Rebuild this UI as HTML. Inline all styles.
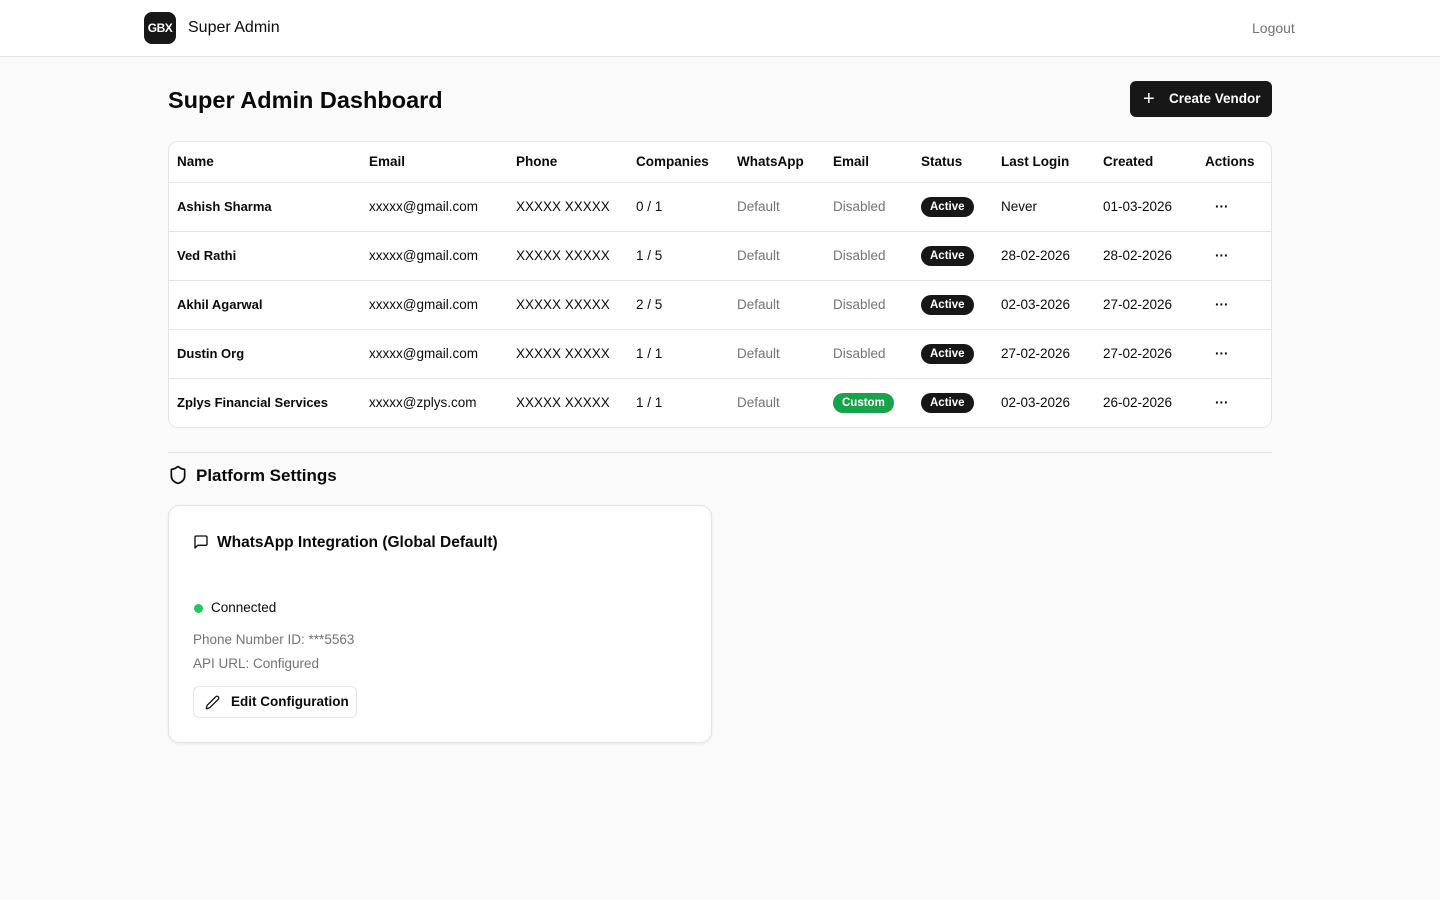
<!DOCTYPE html>
<html><head><meta charset="utf-8"><style>
*{box-sizing:border-box;margin:0;padding:0}
body{width:1440px;height:900px;background:#fafafa;font-family:"Liberation Sans",sans-serif;color:#0a0a0a;font-size:14px;position:relative;overflow:hidden}
.hdr{position:absolute;left:0;top:0;width:1440px;height:57px;background:#fff;border-bottom:1px solid #e5e5e5}
.logo{position:absolute;left:144px;top:12px;width:32px;height:32px;border-radius:8px;background:#171717;color:#fff;font-weight:bold;font-size:12px;line-height:32px;text-align:center;letter-spacing:-0.5px}
.brand{position:absolute;left:188px;top:19px;font-size:16px}
.logout{position:absolute;left:1252px;top:20px;color:#737373;font-size:14px}
h1{position:absolute;left:168px;top:87px;font-size:23.5px;font-weight:bold}
.btn{position:absolute;left:1130px;top:81px;width:142px;height:36px;background:#171717;border-radius:6px;color:#fff;font-weight:bold;font-size:13.5px;line-height:36px;padding-left:39px}
.btn span{position:absolute;left:13px;top:0;font-size:20px;font-weight:normal}
.tbl{position:absolute;left:168px;top:141px;width:1104px;height:287px;background:#fff;border:1px solid #e5e5e5;border-radius:10px;overflow:hidden;font-size:13.5px}
.row{position:relative;height:49px;border-bottom:1px solid #e5e5e5}
.row.h{height:41px}
.row:last-child{border-bottom:none}
.c{position:absolute;top:0;line-height:48px;white-space:nowrap}
.h .c{line-height:40px;font-weight:bold;font-size:13.5px}
.b{font-weight:bold;font-size:13px}
.g{color:#737373}
.badge{display:inline-block;background:#171717;color:#fff;font-size:11.5px;font-weight:bold;line-height:20px;padding:0 9px;border-radius:10px;vertical-align:middle}
.cust{background:#16a34a}
.dots{font-weight:bold;letter-spacing:0px}
.sep{position:absolute;left:168px;top:452px;width:1104px;height:1px;background:#e5e5e5}
.ps{position:absolute;left:196px;top:466px;font-size:17px;font-weight:bold}
.card{position:absolute;left:168px;top:505px;width:544px;height:238px;background:#fff;border:1px solid #e5e5e5;border-radius:12px;box-shadow:0 1px 3px rgba(0,0,0,.08)}
.ebtn{position:absolute;left:24px;top:180px;width:164px;height:32px;border:1px solid #e5e5e5;border-radius:6px;font-weight:bold;font-size:13.5px;line-height:30px;padding-left:37px}
</style></head><body>
<div class="hdr"><div class="logo">GBX</div><div class="brand">Super Admin</div><div class="logout">Logout</div></div>
<h1>Super Admin Dashboard</h1>
<div class="btn"><span>+</span>Create Vendor</div>
<div class="tbl">
<div class="row h"><div class="c" style="left:8px">Name</div><div class="c" style="left:200px">Email</div><div class="c" style="left:347px">Phone</div><div class="c" style="left:467px">Companies</div><div class="c" style="left:568px">WhatsApp</div><div class="c" style="left:664px">Email</div><div class="c" style="left:752px">Status</div><div class="c" style="left:832px">Last Login</div><div class="c" style="left:934px">Created</div><div class="c" style="left:1036px">Actions</div></div>
<div class="row"><div class="c b" style="left:8px">Ashish Sharma</div><div class="c" style="left:200px">xxxxx@gmail.com</div><div class="c" style="left:347px">XXXXX XXXXX</div><div class="c" style="left:467px">0 / 1</div><div class="c g" style="left:568px">Default</div><div class="c g" style="left:664px">Disabled</div><div class="c" style="left:752px"><span class="badge">Active</span></div><div class="c" style="left:832px">Never</div><div class="c" style="left:934px">01-03-2026</div><div class="c dots" style="left:1046px">···</div></div>
<div class="row"><div class="c b" style="left:8px">Ved Rathi</div><div class="c" style="left:200px">xxxxx@gmail.com</div><div class="c" style="left:347px">XXXXX XXXXX</div><div class="c" style="left:467px">1 / 5</div><div class="c g" style="left:568px">Default</div><div class="c g" style="left:664px">Disabled</div><div class="c" style="left:752px"><span class="badge">Active</span></div><div class="c" style="left:832px">28-02-2026</div><div class="c" style="left:934px">28-02-2026</div><div class="c dots" style="left:1046px">···</div></div>
<div class="row"><div class="c b" style="left:8px">Akhil Agarwal</div><div class="c" style="left:200px">xxxxx@gmail.com</div><div class="c" style="left:347px">XXXXX XXXXX</div><div class="c" style="left:467px">2 / 5</div><div class="c g" style="left:568px">Default</div><div class="c g" style="left:664px">Disabled</div><div class="c" style="left:752px"><span class="badge">Active</span></div><div class="c" style="left:832px">02-03-2026</div><div class="c" style="left:934px">27-02-2026</div><div class="c dots" style="left:1046px">···</div></div>
<div class="row"><div class="c b" style="left:8px">Dustin Org</div><div class="c" style="left:200px">xxxxx@gmail.com</div><div class="c" style="left:347px">XXXXX XXXXX</div><div class="c" style="left:467px">1 / 1</div><div class="c g" style="left:568px">Default</div><div class="c g" style="left:664px">Disabled</div><div class="c" style="left:752px"><span class="badge">Active</span></div><div class="c" style="left:832px">27-02-2026</div><div class="c" style="left:934px">27-02-2026</div><div class="c dots" style="left:1046px">···</div></div>
<div class="row"><div class="c b" style="left:8px">Zplys Financial Services</div><div class="c" style="left:200px">xxxxx@zplys.com</div><div class="c" style="left:347px">XXXXX XXXXX</div><div class="c" style="left:467px">1 / 1</div><div class="c g" style="left:568px">Default</div><div class="c" style="left:664px"><span class="badge cust">Custom</span></div><div class="c" style="left:752px"><span class="badge">Active</span></div><div class="c" style="left:832px">02-03-2026</div><div class="c" style="left:934px">26-02-2026</div><div class="c dots" style="left:1046px">···</div></div>
</div>
<div class="sep"></div>
<svg style="position:absolute;left:168px;top:465px" width="20" height="20" viewBox="0 0 24 24" fill="none" stroke="#0a0a0a" stroke-width="2" stroke-linecap="round" stroke-linejoin="round"><path d="M20 13c0 5-3.5 7.5-7.66 8.95a1 1 0 0 1-.67-.01C7.5 20.5 4 18 4 13V6a1 1 0 0 1 1-1c2 0 4.5-1.2 6.24-2.72a1.17 1.17 0 0 1 1.52 0C14.51 3.81 17 5 19 5a1 1 0 0 1 1 1z"/></svg>
<div class="ps">Platform Settings</div>
<div class="card">
<svg style="position:absolute;left:24px;top:28px" width="16" height="16" viewBox="0 0 24 24" fill="none" stroke="#0a0a0a" stroke-width="2" stroke-linecap="round" stroke-linejoin="round"><path d="M21 15a2 2 0 0 1-2 2H7l-4 4V5a2 2 0 0 1 2-2h14a2 2 0 0 1 2 2z"/></svg>
<div style="position:absolute;left:48px;top:28px;font-size:15.5px;font-weight:bold">WhatsApp Integration (Global Default)</div>
<div style="position:absolute;left:25px;top:98px;width:9px;height:9px;border-radius:50%;background:#22c55e"></div>
<div style="position:absolute;left:42px;top:94px;font-size:13.5px">Connected</div>
<div class="g" style="position:absolute;left:24px;top:126px;font-size:13.5px">Phone Number ID: ***5563</div>
<div class="g" style="position:absolute;left:24px;top:150px;font-size:13.5px">API URL: Configured</div>
<div class="ebtn"><svg style="position:absolute;left:11px;top:8px" width="15" height="15" viewBox="0 0 24 24" fill="none" stroke="#0a0a0a" stroke-width="2" stroke-linecap="round" stroke-linejoin="round"><path d="M21.17 6.81a1 1 0 0 0-3.99-3.99L3.84 16.17a2 2 0 0 0-.5.83l-1.32 4.35a.5.5 0 0 0 .62.62l4.35-1.32a2 2 0 0 0 .83-.5z"/></svg>Edit Configuration</div>
</div>
</body></html>
